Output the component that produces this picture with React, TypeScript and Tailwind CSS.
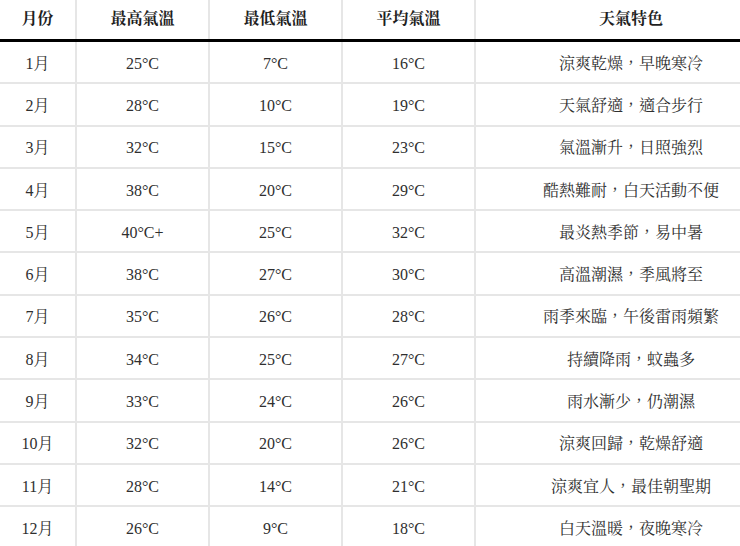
const rows = [
  ["1月", "25°C", "7°C", "16°C", "涼爽乾燥，早晚寒冷"],
  ["2月", "28°C", "10°C", "19°C", "天氣舒適，適合步行"],
  ["3月", "32°C", "15°C", "23°C", "氣溫漸升，日照強烈"],
  ["4月", "38°C", "20°C", "29°C", "酷熱難耐，白天活動不便"],
  ["5月", "40°C+", "25°C", "32°C", "最炎熱季節，易中暑"],
  ["6月", "38°C", "27°C", "30°C", "高溫潮濕，季風將至"],
  ["7月", "35°C", "26°C", "28°C", "雨季來臨，午後雷雨頻繁"],
  ["8月", "34°C", "25°C", "27°C", "持續降雨，蚊蟲多"],
  ["9月", "33°C", "24°C", "26°C", "雨水漸少，仍潮濕"],
  ["10月", "32°C", "20°C", "26°C", "涼爽回歸，乾燥舒適"],
  ["11月", "28°C", "14°C", "21°C", "涼爽宜人，最佳朝聖期"],
  ["12月", "26°C", "9°C", "18°C", "白天溫暖，夜晚寒冷"],
];

const headers = ["月份", "最高氣溫", "最低氣溫", "平均氣溫", "天氣特色"];

// column widths incl. the 2px divider on the right
const colClass = [
  "w-[77px] border-r-2 border-[#e6e6e6]",
  "w-[133px] border-r-2 border-[#e6e6e6]",
  "w-[133px] border-r-2 border-[#e6e6e6]",
  "w-[133px] border-r-2 border-[#e6e6e6]",
  "w-[310px]",
];

export default function App() {
  return (
    <div
      className="w-[740px] h-[546px] overflow-hidden bg-white text-[16px]"
      style={{ fontFamily: '"Liberation Serif", "Noto Serif CJK TC", "Noto Sans CJK TC", serif' }}
    >
      <div className="w-[786px]">
        <div className="flex h-[42px] border-b-[3px] border-black">
          {headers.map((h, i) => (
            <div
              key={h}
              className={`${colClass[i]} shrink-0 flex items-center justify-center font-bold text-[#1f1f1f] pb-[2px]`}
            >
              {h}
            </div>
          ))}
        </div>
        {rows.map((r) => (
          <div key={r[0]} className="flex h-[42.3px] border-b-2 border-[#e6e6e6]">
            {r.map((c, i) => (
              <div
                key={i}
                className={`${colClass[i]} shrink-0 flex items-center justify-center text-[#2f2f2f] leading-none pt-[3px]`}
              >
                {c}
              </div>
            ))}
          </div>
        ))}
      </div>
    </div>
  );
}
